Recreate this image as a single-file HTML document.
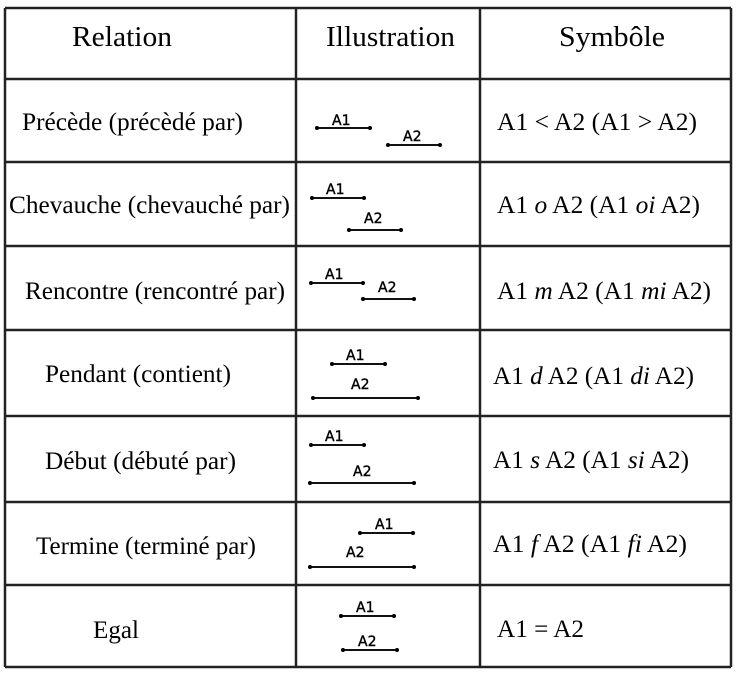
<!DOCTYPE html>
<html><head><meta charset="utf-8"><style>
html,body{margin:0;padding:0;background:#fff;width:749px;height:674px;overflow:hidden}
svg{display:block}
.s{font-family:"Liberation Serif",serif;font-size:25px;fill:#000}
.h{font-family:"Liberation Serif",serif;font-size:28px;fill:#000}
.l{font-family:"DejaVu Sans","Liberation Sans",sans-serif;font-size:14px;fill:#000;stroke:#000;stroke-width:0.4}
line.g{stroke:#222;stroke-width:2.5}
line.b{stroke:#111;stroke-width:2}
</style></head><body>
<svg width="749" height="674" viewBox="0 0 749 674">
<g>
<line class="g" x1="5" y1="8" x2="731" y2="8"/>
<line class="g" x1="5" y1="79" x2="731" y2="79"/>
<line class="g" x1="5" y1="162" x2="731" y2="162"/>
<line class="g" x1="5" y1="246" x2="731" y2="246"/>
<line class="g" x1="5" y1="330" x2="731" y2="330"/>
<line class="g" x1="5" y1="416" x2="731" y2="416"/>
<line class="g" x1="5" y1="502" x2="731" y2="502"/>
<line class="g" x1="5" y1="585" x2="731" y2="585"/>
<line class="g" x1="5" y1="667" x2="731" y2="667"/>
<line class="g" x1="5" y1="8" x2="5" y2="667"/>
<line class="g" x1="296" y1="8" x2="296" y2="667"/>
<line class="g" x1="480" y1="8" x2="480" y2="667"/>
<line class="g" x1="731" y1="8" x2="731" y2="667"/>
</g>
<text class="h" x="72" y="46" textLength="100" lengthAdjust="spacingAndGlyphs">Relation</text>
<text class="h" x="326" y="46" textLength="129" lengthAdjust="spacingAndGlyphs">Illustration</text>
<text class="h" x="559" y="46" textLength="106" lengthAdjust="spacingAndGlyphs">Symbôle</text>

<text class="s" x="22" y="130" textLength="221" lengthAdjust="spacingAndGlyphs">Précède (précèdé par)</text>
<text class="s" x="9" y="213" textLength="281" lengthAdjust="spacingAndGlyphs">Chevauche (chevauché par)</text>
<text class="s" x="25" y="299" textLength="260" lengthAdjust="spacingAndGlyphs">Rencontre (rencontré par)</text>
<text class="s" x="45" y="382" textLength="186" lengthAdjust="spacingAndGlyphs">Pendant (contient)</text>
<text class="s" x="45" y="469" textLength="191" lengthAdjust="spacingAndGlyphs">Début (débuté par)</text>
<text class="s" x="36" y="554" textLength="220" lengthAdjust="spacingAndGlyphs">Termine (terminé par)</text>
<text class="s" x="93" y="638" textLength="46" lengthAdjust="spacingAndGlyphs">Egal</text>

<text class="s" x="497" y="130" textLength="200" lengthAdjust="spacingAndGlyphs">A1 &lt; A2 (A1 &gt; A2)</text>
<text class="s" x="497" y="213" textLength="203" lengthAdjust="spacingAndGlyphs">A1 <tspan font-style="italic">o</tspan> A2 (A1 <tspan font-style="italic">oi</tspan> A2)</text>
<text class="s" x="497" y="299" textLength="214" lengthAdjust="spacingAndGlyphs">A1 <tspan font-style="italic">m</tspan> A2 (A1 <tspan font-style="italic">mi</tspan> A2)</text>
<text class="s" x="493" y="384" textLength="201" lengthAdjust="spacingAndGlyphs">A1 <tspan font-style="italic">d</tspan> A2 (A1 <tspan font-style="italic">di</tspan> A2)</text>
<text class="s" x="493" y="468" textLength="196" lengthAdjust="spacingAndGlyphs">A1 <tspan font-style="italic">s</tspan> A2 (A1 <tspan font-style="italic">si</tspan> A2)</text>
<text class="s" x="493" y="552" textLength="194" lengthAdjust="spacingAndGlyphs">A1 <tspan font-style="italic">f</tspan> A2 (A1 <tspan font-style="italic">fi</tspan> A2)</text>
<text class="s" x="497" y="637" textLength="87" lengthAdjust="spacingAndGlyphs">A1 = A2</text>

<g fill="#000">
<line class="b" x1="317" y1="128" x2="370" y2="128"/><circle cx="317" cy="128" r="2"/><circle cx="370" cy="128" r="2"/><text class="l" x="332" y="125">A1</text>
<line class="b" x1="388" y1="145" x2="440" y2="145"/><circle cx="388" cy="145" r="2"/><circle cx="440" cy="145" r="2"/><text class="l" x="403" y="141">A2</text>
<line class="b" x1="312" y1="198" x2="364" y2="198"/><circle cx="312" cy="198" r="2"/><circle cx="364" cy="198" r="2"/><text class="l" x="326" y="194">A1</text>
<line class="b" x1="349" y1="230" x2="401" y2="230"/><circle cx="349" cy="230" r="2"/><circle cx="401" cy="230" r="2"/><text class="l" x="364" y="223">A2</text>
<line class="b" x1="311" y1="283" x2="363" y2="283"/><circle cx="311" cy="283" r="2"/><circle cx="363" cy="283" r="2"/><text class="l" x="325" y="279">A1</text>
<line class="b" x1="363" y1="299" x2="414" y2="299"/><circle cx="363" cy="299" r="2"/><circle cx="414" cy="299" r="2"/><text class="l" x="378" y="292">A2</text>
<line class="b" x1="332" y1="364" x2="385" y2="364"/><circle cx="332" cy="364" r="2"/><circle cx="385" cy="364" r="2"/><text class="l" x="346" y="360">A1</text>
<line class="b" x1="313" y1="398" x2="418" y2="398"/><circle cx="313" cy="398" r="2"/><circle cx="418" cy="398" r="2"/><text class="l" x="351" y="389">A2</text>
<line class="b" x1="311" y1="445" x2="364" y2="445"/><circle cx="311" cy="445" r="2"/><circle cx="364" cy="445" r="2"/><text class="l" x="325" y="441">A1</text>
<line class="b" x1="310" y1="483" x2="414" y2="483"/><circle cx="310" cy="483" r="2"/><circle cx="414" cy="483" r="2"/><text class="l" x="353" y="476">A2</text>
<line class="b" x1="360" y1="533" x2="413" y2="533"/><circle cx="360" cy="533" r="2"/><circle cx="413" cy="533" r="2"/><text class="l" x="375" y="529">A1</text>
<line class="b" x1="310" y1="567" x2="414" y2="567"/><circle cx="310" cy="567" r="2"/><circle cx="414" cy="567" r="2"/><text class="l" x="346" y="557">A2</text>
<line class="b" x1="341" y1="616" x2="394" y2="616"/><circle cx="341" cy="616" r="2"/><circle cx="394" cy="616" r="2"/><text class="l" x="356" y="612">A1</text>
<line class="b" x1="343" y1="650" x2="397" y2="650"/><circle cx="343" cy="650" r="2"/><circle cx="397" cy="650" r="2"/><text class="l" x="358" y="646">A2</text>
</g>
</svg>
</body></html>
